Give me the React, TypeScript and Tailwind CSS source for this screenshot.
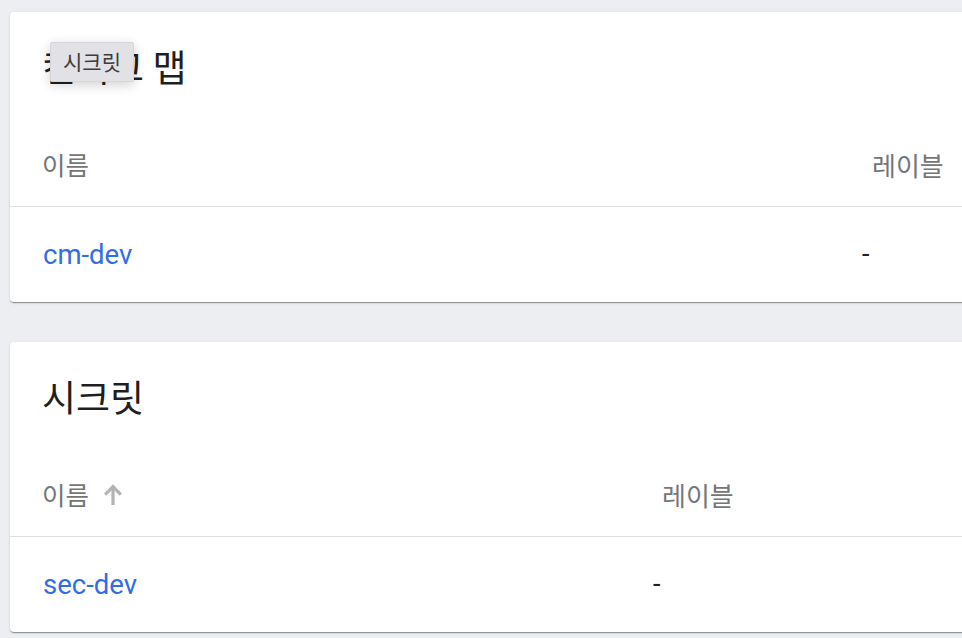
import React from "react";

const ko = "font-['Noto_Sans_CJK_KR',_'Noto_Sans',sans-serif]";
const latin = "font-['Roboto',_'Noto_Sans_CJK_KR',sans-serif]";

function SortUp() {
  return (
    <svg width="20" height="24" viewBox="0 0 20 24" fill="none" className="ml-[14px]">
      <path d="M10 23V5" stroke="#b3b3b3" strokeWidth="3.2" />
      <path d="M2.2 12.6L10 4.6l7.8 8" stroke="#b3b3b3" strokeWidth="3.2" />
    </svg>
  );
}

type CardProps = {
  title: string;
  nameWidth: string;
  labelPad: string;
  item: string;
  sorted?: boolean;
};

function ResourceCard({ title, nameWidth, labelPad, item, sorted }: CardProps) {
  return (
    <div className="w-[1000px] bg-white rounded-[4px] shadow-[0_2px_1px_-1px_rgba(0,0,0,0.25),0_1px_1px_0_rgba(0,0,0,0.14),0_1px_3px_0_rgba(0,0,0,0.12)]">
      <div className={`h-[110px] flex items-center px-[32px] text-[37px] text-[#1f1f1f] ${ko}`}>
        {title}
      </div>
      <div className="h-[85px] flex items-center px-[33px] border-b border-[#e0e0e0]">
        <div className={`${nameWidth} flex items-center text-[25.5px] text-[#767676] ${ko}`}>
          <span className="-ml-[1px]">이름</span>
          {sorted && <SortUp />}
        </div>
        <div className={`${labelPad} text-[26px] text-[#767676] ${ko}`}>레이블</div>
      </div>
      <div className="h-[95px] flex items-center px-[33px]">
        <div className={`${nameWidth} text-[27.5px] text-[#326de6] ${latin}`}>{item}</div>
        <div className={`text-[27px] text-[#212121] ${latin}`}>-</div>
      </div>
    </div>
  );
}

export default function App() {
  return (
    <div className="relative w-[962px] h-[638px] overflow-hidden bg-[#edeef1] pt-3 pl-[10px]">
      <div className="flex flex-col gap-[40px]">
        <ResourceCard title="컨피그 맵" nameWidth="w-[819px]" labelPad="pl-[10px]" item="cm-dev" />
        <ResourceCard title="시크릿" nameWidth="w-[610px]" labelPad="pl-[9px]" item="sec-dev" sorted />
      </div>

      <div
        className={`absolute left-[50px] top-[42px] w-[84px] h-[40px] flex items-center justify-center bg-[#e2e1e6] border border-[#d6d5da] rounded-[2px] shadow-[0_3px_12px_rgba(0,0,0,0.18)] text-[21px] text-[#3d3d3d] ${ko}`}
      >
        시크릿
      </div>
    </div>
  );
}
